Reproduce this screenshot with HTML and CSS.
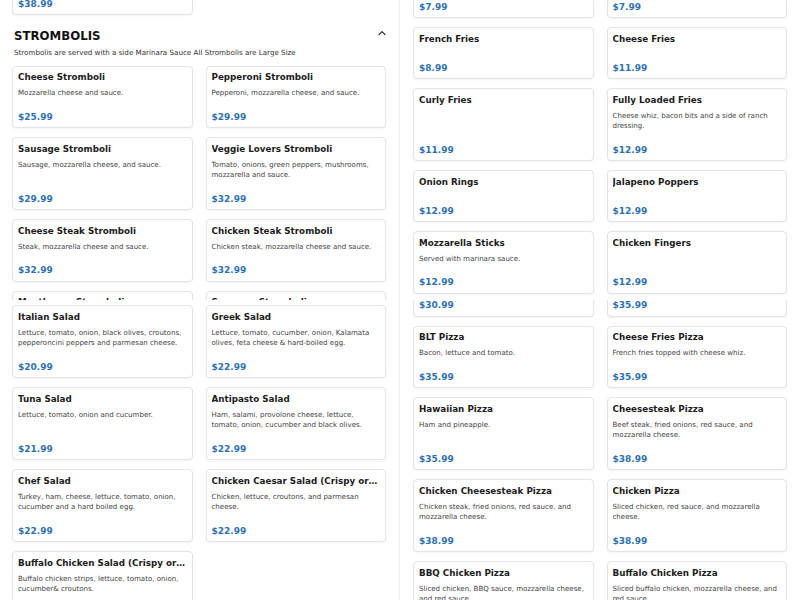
FILE: index.html
```html
<!DOCTYPE html>
<html lang="en">
<head>
  <meta charset="UTF-8">
  <title>Menu</title>
  <meta name="viewport" content="width=device-width, initial-scale=1">
  <link rel="stylesheet" href="styles.css">
</head>
<body>
<div class="board">

  <!-- top left: end of calzones, strombolis -->
  <section class="pane pane-left">
    <div class="pane-scroll at-calzones">
      <div class="menu-grid">
        <article class="item">
          <h3 class="item-name">Meat Lovers Calzone</h3>
          <p class="item-desc">Pepperoni, sausage, ham and ricotta.</p>
          <div class="item-price">$38.99</div>
        </article>
      </div>

      <div class="category">
        <div class="category-head">
          <h2 class="category-title">STROMBOLIS</h2>
          <button class="collapse-btn" title="Collapse">
            <svg width="8" height="8" viewBox="0 0 8 8"><path d="M1 5.6 L4 2.6 L7 5.6" fill="none" stroke="#222" stroke-width="1.2" stroke-linecap="round" stroke-linejoin="round"/></svg>
          </button>
        </div>
        <p class="category-note">Strombolis are served with a side Marinara Sauce All Strombolis are Large Size</p>
        <div class="menu-grid">
          <article class="item">
            <h3 class="item-name">Cheese Stromboli</h3>
            <p class="item-desc">Mozzarella cheese and sauce.</p>
            <div class="item-price">$25.99</div>
          </article>
          <article class="item">
            <h3 class="item-name">Pepperoni Stromboli</h3>
            <p class="item-desc">Pepperoni, mozzarella cheese, and sauce.</p>
            <div class="item-price">$29.99</div>
          </article>
          <article class="item">
            <h3 class="item-name">Sausage Stromboli</h3>
            <p class="item-desc">Sausage, mozzarella cheese, and sauce.</p>
            <div class="item-price">$29.99</div>
          </article>
          <article class="item">
            <h3 class="item-name">Veggie Lovers Stromboli</h3>
            <p class="item-desc">Tomato, onions, green peppers, mushrooms, mozzarella and sauce.</p>
            <div class="item-price">$32.99</div>
          </article>
          <article class="item">
            <h3 class="item-name">Cheese Steak Stromboli</h3>
            <p class="item-desc">Steak, mozzarella cheese and sauce.</p>
            <div class="item-price">$32.99</div>
          </article>
          <article class="item">
            <h3 class="item-name">Chicken Steak Stromboli</h3>
            <p class="item-desc">Chicken steak, mozzarella cheese and sauce.</p>
            <div class="item-price">$32.99</div>
          </article>
          <article class="item">
            <h3 class="item-name">Meatlovers Stromboli</h3>
            <p class="item-desc">Pepperoni, sausage, ham, bacon, mozzarella and sauce.</p>
            <div class="item-price">$34.99</div>
          </article>
          <article class="item">
            <h3 class="item-name">Supreme Stromboli</h3>
            <p class="item-desc">Pepperoni, sausage, peppers, onions, mushrooms and sauce.</p>
            <div class="item-price">$34.99</div>
          </article>
        </div>
      </div>
    </div>
  </section>

  <!-- top right: sides -->
  <section class="pane pane-right">
    <div class="pane-scroll at-sides">
      <div class="menu-grid">
        <article class="item">
          <h3 class="item-name">Garlic Bread</h3>
          <div class="item-price">$7.99</div>
        </article>
        <article class="item">
          <h3 class="item-name">Garlic Knots</h3>
          <div class="item-price">$7.99</div>
        </article>
        <article class="item">
          <h3 class="item-name">French Fries</h3>
          <div class="item-price">$8.99</div>
        </article>
        <article class="item">
          <h3 class="item-name">Cheese Fries</h3>
          <div class="item-price">$11.99</div>
        </article>
        <article class="item">
          <h3 class="item-name">Curly Fries</h3>
          <div class="item-price">$11.99</div>
        </article>
        <article class="item">
          <h3 class="item-name">Fully Loaded Fries</h3>
          <p class="item-desc">Cheese whiz, bacon bits and a side of ranch dressing.</p>
          <div class="item-price">$12.99</div>
        </article>
        <article class="item">
          <h3 class="item-name">Onion Rings</h3>
          <div class="item-price">$12.99</div>
        </article>
        <article class="item">
          <h3 class="item-name">Jalapeno Poppers</h3>
          <div class="item-price">$12.99</div>
        </article>
        <article class="item">
          <h3 class="item-name">Mozzarella Sticks</h3>
          <p class="item-desc">Served with marinara sauce.</p>
          <div class="item-price">$12.99</div>
        </article>
        <article class="item">
          <h3 class="item-name">Chicken Fingers</h3>
          <div class="item-price">$12.99</div>
        </article>
      </div>
    </div>
  </section>

  <!-- bottom left: salads -->
  <section class="pane pane-left">
    <div class="pane-scroll at-salads">
      <div class="category">
        <div class="category-head">
          <h2 class="category-title">SALADS</h2>
        </div>
        <div class="menu-grid">
          <article class="item">
            <h3 class="item-name">Italian Salad</h3>
            <p class="item-desc">Lettuce, tomato, onion, black olives, croutons, pepperoncini peppers and parmesan cheese.</p>
            <div class="item-price">$20.99</div>
          </article>
          <article class="item">
            <h3 class="item-name">Greek Salad</h3>
            <p class="item-desc">Lettuce, tomato, cucumber, onion, Kalamata olives, feta cheese &amp; hard-boiled egg.</p>
            <div class="item-price">$22.99</div>
          </article>
          <article class="item">
            <h3 class="item-name">Tuna Salad</h3>
            <p class="item-desc">Lettuce, tomato, onion and cucumber.</p>
            <div class="item-price">$21.99</div>
          </article>
          <article class="item">
            <h3 class="item-name">Antipasto Salad</h3>
            <p class="item-desc">Ham, salami, provolone cheese, lettuce, tomato, onion, cucumber and black olives.</p>
            <div class="item-price">$22.99</div>
          </article>
          <article class="item">
            <h3 class="item-name">Chef Salad</h3>
            <p class="item-desc">Turkey, ham, cheese, lettuce, tomato, onion, cucumber and a hard boiled egg.</p>
            <div class="item-price">$22.99</div>
          </article>
          <article class="item">
            <h3 class="item-name">Chicken Caesar Salad (Crispy or Grilled)</h3>
            <p class="item-desc">Chicken, lettuce, croutons, and parmesan cheese.</p>
            <div class="item-price">$22.99</div>
          </article>
          <article class="item">
            <h3 class="item-name">Buffalo Chicken Salad (Crispy or Grilled)</h3>
            <p class="item-desc">Buffalo chicken strips, lettuce, tomato, onion, cucumber&amp; croutons.</p>
            <div class="item-price">$22.99</div>
          </article>
        </div>
      </div>
    </div>
  </section>

  <!-- bottom right: specialty pizza -->
  <section class="pane pane-right">
    <div class="pane-scroll at-pizza">
      <div class="menu-grid">
        <article class="item">
          <h3 class="item-name">Margherita Pizza</h3>
          <div class="item-price">$30.99</div>
        </article>
        <article class="item">
          <h3 class="item-name">Meat Lovers Pizza</h3>
          <div class="item-price">$35.99</div>
        </article>
        <article class="item">
          <h3 class="item-name">BLT Pizza</h3>
          <p class="item-desc">Bacon, lettuce and tomato.</p>
          <div class="item-price">$35.99</div>
        </article>
        <article class="item">
          <h3 class="item-name">Cheese Fries Pizza</h3>
          <p class="item-desc">French fries topped with cheese whiz.</p>
          <div class="item-price">$35.99</div>
        </article>
        <article class="item">
          <h3 class="item-name">Hawaiian Pizza</h3>
          <p class="item-desc">Ham and pineapple.</p>
          <div class="item-price">$35.99</div>
        </article>
        <article class="item">
          <h3 class="item-name">Cheesesteak Pizza</h3>
          <p class="item-desc">Beef steak, fried onions, red sauce, and mozzarella cheese.</p>
          <div class="item-price">$38.99</div>
        </article>
        <article class="item">
          <h3 class="item-name">Chicken Cheesesteak Pizza</h3>
          <p class="item-desc">Chicken steak, fried onions, red sauce, and mozzarella cheese.</p>
          <div class="item-price">$38.99</div>
        </article>
        <article class="item">
          <h3 class="item-name">Chicken Pizza</h3>
          <p class="item-desc">Sliced chicken, red sauce, and mozzarella cheese.</p>
          <div class="item-price">$38.99</div>
        </article>
        <article class="item">
          <h3 class="item-name">BBQ Chicken Pizza</h3>
          <p class="item-desc">Sliced chicken, BBQ sauce, mozzarella cheese, and red sauce.</p>
          <div class="item-price">$38.99</div>
        </article>
        <article class="item">
          <h3 class="item-name">Buffalo Chicken Pizza</h3>
          <p class="item-desc">Sliced buffalo chicken, mozzarella cheese, and red sauce.</p>
          <div class="item-price">$38.99</div>
        </article>
      </div>
    </div>
  </section>

</div>
</body>
</html>
```

FILE: styles.css
```css
html, body {
  margin: 0;
  padding: 0;
  background: #fff;
  overflow: hidden;
}
body {
  font-family: "DejaVu Sans", Verdana, sans-serif;
  color: #1c1c1c;
}
.board {
  display: grid;
  grid-template-columns: 400px 400px;
  grid-template-rows: 300px 300px;
  width: 800px;
  height: 600px;
}
.pane {
  overflow: hidden;
  box-sizing: border-box;
  padding: 0 13px;
}
.pane-left {
  padding: 0 13px 0 12px;
  border-right: 1px solid #efefef;
}

/* each pane shows its list scrolled part way down */
.at-calzones { margin-top: -47.2px; }
.at-sides { margin-top: -33.7px; }
.at-salads { margin-top: -32px; }
.at-pizza { margin-top: -35.3px; }

.category { padding-top: 12px; }
.category-head {
  display: flex;
  justify-content: space-between;
  align-items: flex-start;
  padding-left: 2px;
}
.category-title {
  margin: 0;
  font-size: 11.75px;
  line-height: 18px;
  font-weight: 700;
  color: #111;
}
.collapse-btn {
  all: unset;
  display: flex;
  margin-top: 1.5px;
  cursor: pointer;
}
.category-note {
  margin: 3px 0 0;
  padding-left: 2px;
  font-size: 7.15px;
  line-height: 10.5px;
  color: #333;
}
.category .menu-grid { margin-top: 7px; }

.menu-grid {
  display: grid;
  grid-template-columns: 1fr 1fr;
  column-gap: 13px;
  row-gap: 9px;
}
.item {
  display: flex;
  flex-direction: column;
  min-width: 0;
  padding: 4.5px 5px;
  background: #fff;
  border: 1px solid #e4e4e4;
  border-radius: 4px;
  box-shadow: 0 1px 2px rgba(0, 0, 0, .05);
}
.item-name {
  margin: 0 0 5px;
  font-size: 8.75px;
  line-height: 12px;
  font-weight: 700;
  color: #1c1c1c;
  white-space: nowrap;
  overflow: hidden;
  text-overflow: ellipsis;
}
.item-desc {
  margin: 0;
  font-size: 7.05px;
  line-height: 10.5px;
  color: #444;
}
.item-price {
  margin-top: auto;
  padding-top: 12px;
  font-size: 9px;
  line-height: 12px;
  font-weight: 700;
  color: #2f71ae;
}
```
